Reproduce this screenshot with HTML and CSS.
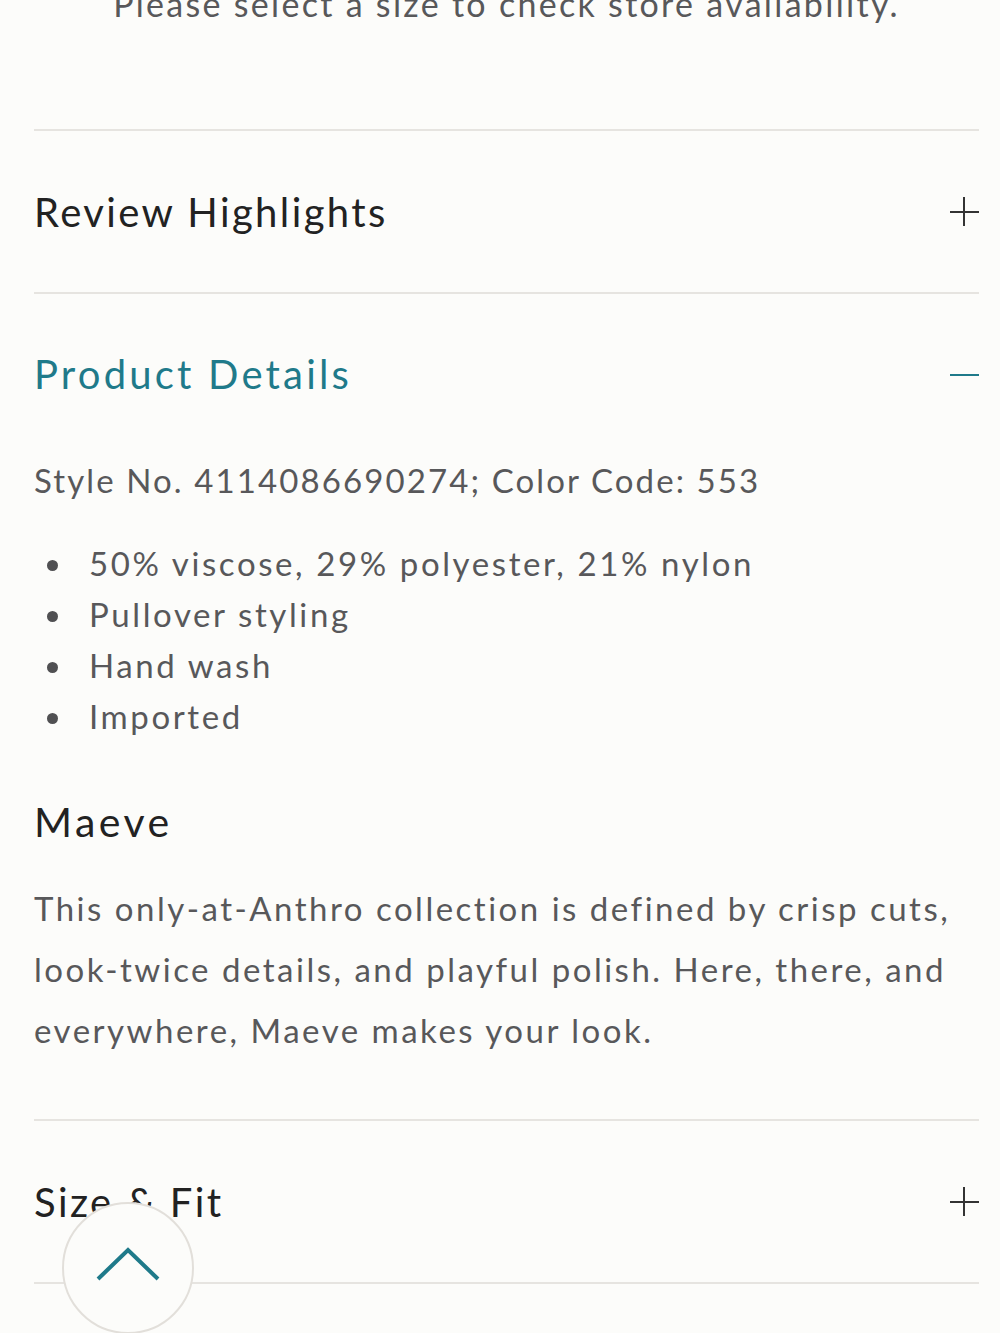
FILE: index.html
```html
<!DOCTYPE html>
<html lang="en">
<head>
<meta charset="utf-8">
<title>Product Details</title>
<link rel="stylesheet" href="styles.css">
</head>
<body>
<main class="page">
  <p class="store-note">Please select a size to check store availability.</p>

  <section class="acc">
    <div class="acc-head">
      <h2 class="acc-title">Review Highlights</h2>
      <span class="icon plus" aria-hidden="true"></span>
    </div>
  </section>

  <section class="acc open">
    <div class="acc-head">
      <h2 class="acc-title">Product Details</h2>
      <span class="icon minus" aria-hidden="true"></span>
    </div>
    <div class="acc-body">
      <p class="style-no">Style No. 4114086690274; Color Code: 553</p>
      <ul class="bullets">
        <li>50% viscose, 29% polyester, 21% nylon</li>
        <li>Pullover styling</li>
        <li>Hand wash</li>
        <li>Imported</li>
      </ul>
      <h3 class="brand">Maeve</h3>
      <p class="brand-copy">This only-at-Anthro collection is defined by crisp cuts, look-twice details, and playful polish. Here, there, and everywhere, Maeve makes your look.</p>
    </div>
  </section>

  <section class="acc">
    <div class="acc-head">
      <h2 class="acc-title">Size &amp; Fit</h2>
      <span class="icon plus" aria-hidden="true"></span>
    </div>
  </section>
</main>

<button class="to-top" aria-label="Back to top">
  <svg width="66" height="36" viewBox="0 0 66 36"><path d="M3 32 L33 3 L63 32" fill="none" stroke="#1f7a8a" stroke-width="4"/></svg>
</button>
</body>
</html>
```

FILE: styles.css
```css
html, body {
  margin: 0;
  padding: 0;
  background: #fcfcfa;
}
body {
  font-family: "Lato", "Open Sans", sans-serif;
  color: #58585a;
  height: 1333px;
  overflow: hidden;
}
.page {
  padding: 0 21px 0 34px;
}
.store-note {
  margin: -18px 0 0;
  height: 149px;
  font-size: 34px;
  line-height: 44px;
  letter-spacing: 2.3px;
  text-align: center;
  color: #58585a;
  box-sizing: border-box;
  border-bottom: 2px solid #e6e4e0;
}
.acc {
  border-bottom: 2px solid #e6e4e0;
}
.acc-head {
  display: flex;
  align-items: center;
  justify-content: space-between;
  height: 161px;
}
.acc-title {
  margin: 0;
  font-weight: 400;
  font-size: 40px;
  letter-spacing: 2.4px;
  color: #222;
}
.open .acc-head {
  height: 160px;
}
.open .acc-title {
  color: #1f7a8a;
  letter-spacing: 3.2px;
}
.icon {
  position: relative;
  width: 29px;
  height: 29px;
  flex: none;
}
.icon::before,
.icon::after {
  content: "";
  position: absolute;
  background: #333;
}
.plus::before {
  left: 0;
  right: 0;
  top: 14px;
  height: 2px;
}
.plus::after {
  top: 0;
  bottom: 0;
  left: 13px;
  width: 2px;
}
.minus::before {
  left: 0;
  right: 0;
  top: 14px;
  height: 2px;
  background: #1f7a8a;
}
.minus::after {
  display: none;
}
.acc-body {
  padding: 2px 0 58px;
}
.style-no {
  margin: 0 0 34px;
  font-size: 33px;
  line-height: 48px;
  letter-spacing: 2.1px;
}
.bullets {
  margin: 0 0 52px;
  padding: 0 0 0 55px;
  list-style: none;
  font-size: 33px;
  line-height: 51px;
  letter-spacing: 2.6px;
}
.bullets li {
  position: relative;
}
.bullets li::before {
  content: "";
  position: absolute;
  left: -42px;
  top: 22px;
  width: 11px;
  height: 11px;
  border-radius: 50%;
  background: #505052;
}
.brand {
  margin: 0 0 28px;
  font-weight: 400;
  font-size: 41px;
  line-height: 56px;
  letter-spacing: 3.5px;
  color: #222;
}
.brand-copy {
  margin: 0;
  font-size: 33px;
  line-height: 61px;
  letter-spacing: 2.5px;
}
.to-top {
  position: fixed;
  left: 62px;
  top: 1202px;
  width: 132px;
  height: 132px;
  border-radius: 50%;
  border: 2px solid #e2dfda;
  background: #fcfcfa;
  padding: 0;
  display: flex;
  align-items: center;
  justify-content: center;
}
.to-top svg {
  margin-top: -6px;
}
```
